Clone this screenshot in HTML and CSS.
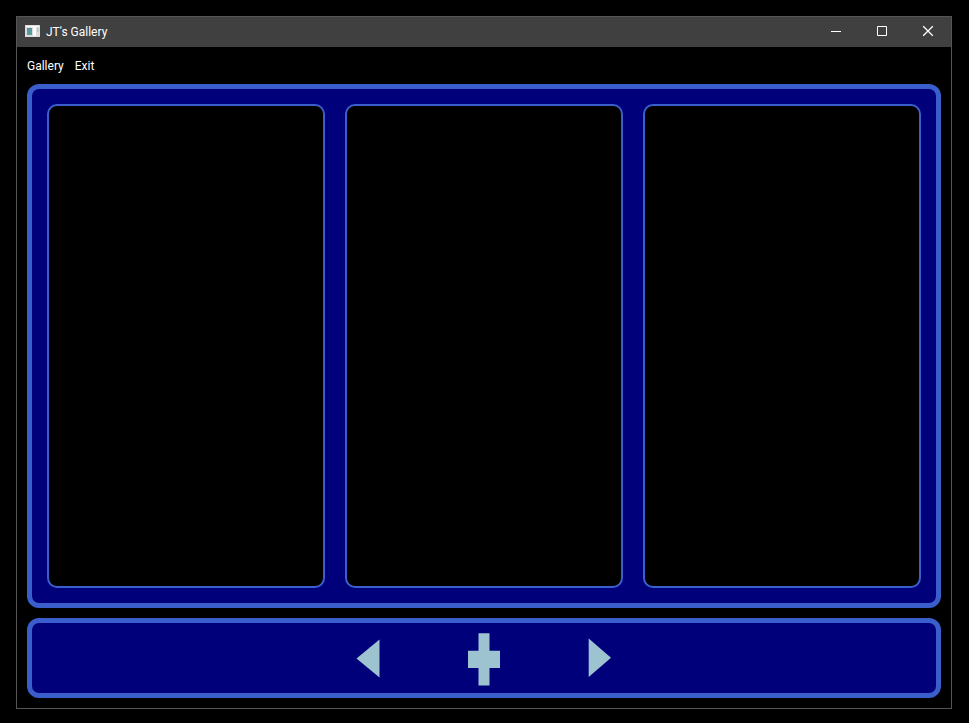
FILE: index.html
```html
<!DOCTYPE html>
<html lang="en">
<head>
<meta charset="utf-8">
<title>JT's Gallery</title>
<link rel="stylesheet" href="styles.css">
</head>
<body>
<div class="window">
  <header class="titlebar">
    <svg class="app-icon" viewBox="0 0 16 16" aria-hidden="true">
      <defs>
        <linearGradient id="screen" x1="0" y1="0" x2="1" y2="1">
          <stop offset="0" stop-color="#5a87b8"/>
          <stop offset="1" stop-color="#55ab7c"/>
        </linearGradient>
      </defs>
      <path fill="#dcdcdc" d="M0 1h15v12H0z"/>
      <path fill="#fafafa" d="M1 2h13v1H1zM8 3h3v9H8z"/>
      <path fill="url(#screen)" d="M2 4h5v7H2z"/>
      <path fill="#b9cfc6" d="M12 4h2v4h-2z"/>
    </svg>
    <h1 class="title">JT's Gallery</h1>
    <div class="window-controls">
      <button class="control" type="button" aria-label="Minimize">
        <svg viewBox="0 0 10 10"><path d="M0 5.5h10"/></svg>
      </button>
      <button class="control" type="button" aria-label="Maximize">
        <svg viewBox="0 0 10 10"><path d="M.5.5h9v9h-9z"/></svg>
      </button>
      <button class="control" type="button" aria-label="Close">
        <svg viewBox="0 0 10 10"><path class="cross" d="M.2.2l9.600 9.600M9.800.2L.2 9.800"/></svg>
      </button>
    </div>
  </header>
  <nav class="menu">
    <button class="menu-item" type="button">Gallery</button>
    <button class="menu-item" type="button">Exit</button>
  </nav>
  <main class="content">
    <section class="panel gallery">
      <div class="frame"></div>
      <div class="frame"></div>
      <div class="frame"></div>
    </section>
    <section class="panel toolbar">
      <button class="tool" type="button" aria-label="Previous">
        <svg viewBox="0 0 116 70"><path d="M46.5 35.5L69.5 16.500v38z"/></svg>
      </button>
      <button class="tool" type="button" aria-label="Add">
        <svg viewBox="0 0 116 70"><path d="M52.5 10.3h11v17.4H74V45H63.5v17.5h-11V45H42V27.7h10.5z"/></svg>
      </button>
      <button class="tool" type="button" aria-label="Next">
        <svg viewBox="0 0 116 70"><path d="M46.700 15.500v38.500L69 34.800z"/></svg>
      </button>
    </section>
  </main>
</div>
</body>
</html>
```
FILE: styles.css
```css
* {
  box-sizing: border-box;
}

body {
  margin: 0;
  background: #000;
  color: #fff;
  font-family: Roboto, "Open Sans", sans-serif;
  font-size: 12px;
  line-height: 16px;
}

button {
  margin: 0;
  padding: 0;
  border: 0;
  background: none;
  color: inherit;
  font: inherit;
}

.window {
  display: flex;
  flex-direction: column;
  min-height: calc(100vh - 30px);
  margin: 16px 17px 14px 16px;
  border: 1px solid #555;
}

.titlebar {
  display: flex;
  align-items: center;
  height: 30px;
  padding-left: 8px;
  background: #404040;
}

.app-icon {
  width: 16px;
  height: 16px;
  margin-right: 5px;
}

.title {
  margin: 0;
  font-size: 12px;
  font-weight: 400;
}

.window-controls {
  display: flex;
  height: 100%;
  margin-left: auto;
  padding-bottom: 2px;
}

.control {
  display: flex;
  align-items: center;
  justify-content: center;
  width: 46px;
}

.control svg {
  width: 10px;
  height: 10px;
  overflow: visible;
  fill: none;
  stroke: #fff;
}

.cross {
  stroke-width: 1.3;
}

.menu {
  display: flex;
  align-items: center;
  gap: 11px;
  height: 37px;
  padding: 0 10px;
}

.content {
  display: flex;
  flex: 1;
  flex-direction: column;
  gap: 10px;
  padding: 0 10px 10px;
}

.panel {
  border: 5px solid #3a5fcd;
  border-radius: 12px;
  background: #00007b;
}

.gallery {
  display: grid;
  flex: 1;
  grid-template-columns: repeat(3, 1fr);
  gap: 20px;
  padding: 15px;
}

.frame {
  border: 2px solid #3a5fcd;
  border-radius: 10px;
  background: #000;
}

.toolbar {
  display: flex;
  justify-content: center;
}

.tool svg {
  display: block;
  width: 116px;
  height: 70px;
  fill: #9dc3d1;
}
```
